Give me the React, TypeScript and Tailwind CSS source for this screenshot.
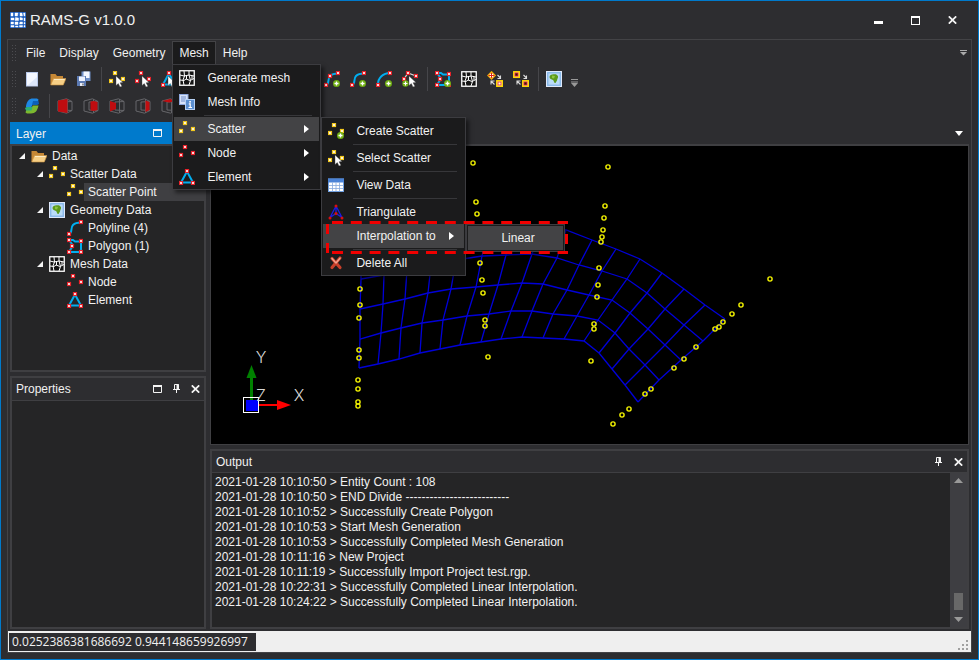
import React from "react";

type IconProps = { children?: React.ReactNode; size?: number };

const RED = "#e8222a";
const YELLOW = "#f2c81e";
const CYAN = "#00aef0";

function Svg({ children }: IconProps) {
  return (
    <svg width="16" height="16" viewBox="0 0 16 16" fill="none" className="block shrink-0" aria-hidden="true">
      {children}
    </svg>
  );
}

function Dot({ x, y, c = RED }: { x: number; y: number; c?: string }) {
  return <rect x={x + 0.5} y={y + 0.5} width="3" height="3" fill="#fff" stroke={c} strokeWidth="1.2" />;
}

function PlusBadge() {
  return (
    <g>
      <circle cx="12.5" cy="12.5" r="3.5" fill="#6fae12" />
      <path d="M12.5 10.5v4M10.5 12.5h4" stroke="#fff" strokeWidth="1.3" />
    </g>
  );
}

function CursorBadge() {
  return <path d="M7 5l7 6.5-3 .3 2 3.4-2 .8-1.700-3.400L7 14.500z" fill="#fff" stroke="#444" strokeWidth=".4" />;
}

function PointsIcon({ c, badge }: { c: string; badge?: React.ReactNode }) {
  return (
    <Svg>
      <Dot x={0} y={8} c={c} />
      <Dot x={4} y={0} c={c} />
      <Dot x={12} y={6} c={c} />
      {badge}
    </Svg>
  );
}

function TriangleIcon({ badge }: { badge?: React.ReactNode }) {
  return (
    <Svg>
      <path d="M8 2.500L2 13.500h12z" stroke={CYAN} strokeWidth="2" />
      <Dot x={6} y={0} />
      <Dot x={0} y={12} />
      <Dot x={12} y={12} />
      {badge}
    </Svg>
  );
}

function TriangulateIcon() {
  return (
    <Svg>
      <path d="M8 2L2 13.500 8 9.500l6 4L8 2v7.500" stroke="#1c1ce0" strokeWidth="1.3" />
      <circle cx="8" cy="2" r="1.500" fill="#d90f0f" />
      <circle cx="2" cy="14" r="1.500" fill="#d90f0f" />
      <circle cx="14" cy="14" r="1.500" fill="#d90f0f" />
      <circle cx="8" cy="9.500" r="1.500" fill="#d90f0f" />
    </Svg>
  );
}

function PolylineIcon({ mid, badge }: { mid?: boolean; badge?: React.ReactNode }) {
  return (
    <Svg>
      <path d="M2 14c4-1 1-6 4-9 2-2 4-2.500 8-2.500" stroke={CYAN} strokeWidth="2" />
      <Dot x={0} y={12} />
      <Dot x={12} y={0} />
      {mid && <Dot x={4} y={3} />}
      {badge}
    </Svg>
  );
}

function ArcIcon() {
  return (
    <Svg>
      <path d="M2 13.500C2 7 7 2 14 2" stroke={CYAN} strokeWidth="2" />
      <Dot x={0} y={12} />
      <Dot x={12} y={0} />
      <PlusBadge />
    </Svg>
  );
}

function EditLineIcon() {
  return (
    <Svg>
      <path d="M2 8l4-6 8 3" stroke="#ddd" strokeWidth="1.3" />
      <Dot x={4} y={0} />
      <Dot x={12} y={3} />
      <Dot x={0} y={6} />
      <circle cx="3.500" cy="12.500" r="3.200" fill="#6fae12" />
      <path d="M3.500 10.500v4M1.500 12.500h4" stroke="#fff" strokeWidth="1.200" />
      <CursorBadge />
    </Svg>
  );
}

function PolygonIcon({ badge }: { badge?: React.ReactNode }) {
  return (
    <Svg>
      <path d="M2 2h4l2 1.500h6V14H2l4-6.500L2 2" stroke={CYAN} strokeWidth="2" />
      <Dot x={0} y={0} />
      <Dot x={12} y={1} />
      <Dot x={3} y={6} />
      <Dot x={0} y={12} />
      <Dot x={12} y={12} />
      {badge}
    </Svg>
  );
}

function MeshIcon() {
  return (
    <Svg>
      <rect x=".75" y=".75" width="14.500" height="14.500" fill="#141414" stroke="#fff" strokeWidth="1.300" />
      <path d="M1 5l4 1 5-1 5 1M1 10l4 .5 2-1.500 4 1.500 4-2M5 1l.5 5L4 10l1 5M10 1v4l1.500 5.500L10 15M7.500 9V5.500M13 5.500V9" stroke="#fff" strokeWidth="1" />
    </Svg>
  );
}

function MapIcon() {
  return (
    <Svg>
      <rect x=".5" y=".5" width="15" height="15" fill="#8fc3ee" stroke="#dfe9fb" />
      <rect x="2" y="2" width="12" height="12" fill="#b9dcf8" stroke="#7fa6df" strokeWidth=".6" />
      <path d="M3.500 6c0-2 2-2.500 4-2.800 2-.3 4 .3 4.500 2 .4 1.600-.8 2.400-1 4.300L9.500 12C8 12.500 8 10 7 9 5.500 8.500 3.500 8 3.500 6z" fill="#5c9a1c" />
      <path d="M6 4.500l3 .5-1 2.500-2-.5z" fill="#8cc63f" />
    </Svg>
  );
}

function FolderIcon() {
  return (
    <Svg>
      <path d="M.5 13.500V3h5l1.500 2h6v8.500z" fill="#c58735" />
      <path d="M.7 14L3.500 7.500H16L13.300 14z" fill="#f6cf86" stroke="#c9913e" strokeWidth=".6" />
      <path d="M4 8.500h10.500" stroke="#fdebc4" strokeWidth="1" />
    </Svg>
  );
}

function NewFileIcon() {
  return (
    <Svg>
      <rect x="2.500" y="1.500" width="11" height="13.500" fill="#f5f8ff" stroke="#b9c9ea" />
      <path d="M4 14l9-8v8z" fill="#dde7f9" />
    </Svg>
  );
}

function SaveAllIcon() {
  return (
    <Svg>
      <rect x="5.500" y=".5" width="9" height="9.500" fill="#6f8fc8" />
      <rect x="7.500" y=".5" width="6" height="6.500" fill="#f4f7ff" />
      <rect x="1" y="5" width="9" height="10" fill="#5c7ab2" />
      <rect x="3" y="5.500" width="6" height="4.500" fill="#eef3ff" />
      <rect x="4" y="12" width="4" height="3" fill="#e8edf7" />
      <rect x="6.500" y="12.500" width="1" height="2" fill="#333" />
    </Svg>
  );
}

function InfoIcon() {
  return (
    <Svg>
      <rect x=".5" y=".5" width="8.500" height="10" fill="#d6e2f8" stroke="#8ea8dc" />
      <path d="M2 3h5M2 5h5M2 7h4" stroke="#6f8cc8" />
      <rect x="6.500" y="5.500" width="9" height="10" fill="#5b8fd0" stroke="#b5d0f3" />
      <rect x="10.300" y="7" width="1.600" height="1.600" fill="#fff" />
      <path d="M9.800 9.800h1.400v3.700M9.500 13.500h3.500" stroke="#fff" strokeWidth="1.200" />
    </Svg>
  );
}

function TableIcon() {
  return (
    <Svg>
      <rect x=".5" y="2" width="15" height="12.500" fill="#fff" stroke="#6f9fe0" />
      <rect x="0" y="1.500" width="16" height="4" fill="#4b83d6" />
      <path d="M.5 8.500h15M.5 11.500h15M4.500 5.500v9M8 5.500v9M11.500 5.500v9" stroke="#86a9dd" strokeWidth=".8" />
    </Svg>
  );
}

function DeleteIcon() {
  return (
    <Svg>
      <path d="M4 3.500l8 9M12 3L4 12.500" stroke="#c8402a" strokeWidth="3.200" strokeLinecap="round" />
      <path d="M4 3.500l3.500 4M12 3.200L8 8" stroke="#f5a08c" strokeWidth="1.500" strokeLinecap="round" />
    </Svg>
  );
}

function ArrowPair() {
  return (
    <path d="M10.500 4l3 3M13.500 4.500V7.500H10.500M7.500 13.500l-3.500-3.500M4 13.500V10H7.500" stroke="#ddd" strokeWidth="1.100" />
  );
}

function MergeIcon() {
  return (
    <Svg>
      <path d="M4.500.8L8.200 4.500 4.500 8.200.8 4.500z" fill="#fff" stroke="#f0a800" strokeWidth="1.300" />
      <path d="M1.500 4.500h6M4.500 2v5" stroke="#d82020" />
      <rect x="9.800" y="9.800" width="5.500" height="5.500" fill="#fff" stroke="#ffd800" strokeWidth="1.500" />
      <rect x="11" y="11" width="3" height="3" stroke="#e02020" strokeWidth=".8" />
      <ArrowPair />
    </Svg>
  );
}

function SplitIcon() {
  return (
    <Svg>
      <rect x=".8" y=".8" width="5.500" height="5.500" fill="#fff" stroke="#ffd800" strokeWidth="1.500" />
      <rect x="2" y="2" width="3" height="3" fill="#222" stroke="#e02020" />
      <rect x="9.800" y="9.800" width="5.500" height="5.500" fill="#fff" stroke="#ffd800" strokeWidth="1.500" />
      <rect x="11" y="11" width="3" height="3" fill="#222" stroke="#e02020" />
      <ArrowPair />
    </Svg>
  );
}

function RefreshIcon() {
  return (
    <Svg>
      <path d="M2 8C3 3 5 .5 9 .5h4l1.500 1L13 7H8.500L7 9.500H2z" fill="#1e88e5" />
      <path d="M9 3h5.500L15 6l-2 1H8z" fill="#0d5fb8" />
      <path d="M14.500 7.500c-1 5-3 8-7.500 8H3l-1.500-1L3 9.500h4.500L9 7.500z" fill="#7cb82f" />
      <path d="M7.500 12.500H2L1 10l2-1h5.500z" fill="#2fae72" />
    </Svg>
  );
}

type Face = "front" | "right" | "left" | "back" | "top" | "bottom";

const faces: Record<Face, string> = {
  front: "M1 2.500L10.500 1v14L1 13.500z",
  right: "M7.500 3.500L11 3l3.500 1v8L11 13l-3.500-.5z",
  left: "M1 3l6 2v6l-6 2.500z",
  back: "M10.500 2.500L14.500 4v8l-4 2z",
  top: "M1 3l8-2 6 2-7 1.500z",
  bottom: "M1 13l7-1.500L15 13l-7 2z",
};

function CubeIcon({ face }: { face: Face }) {
  return (
    <Svg>
      <path d="M1 3L9.500.800 15 3.500v9L9.500 15.200 1 13zM6 4v8M6 4l9-.5M6 12l9 .5M10.500 1v14" stroke="#66666a" strokeWidth="1" />
      <path d={faces[face]} fill="#c00d10" />
    </Svg>
  );
}

function LogoIcon() {
  return (
    <svg width="16" height="16" viewBox="0 0 16 16" className="block" aria-hidden="true">
      <rect width="16" height="16" fill="#1f5fc0" />
      <path d="M1 1h2v3H1zM5 1h3l-.5 3H5zM10 1h2l.5 3H10zM13.500 1H15v3h-1zM1 6h3v2H1zM5.500 5.500l3 .5v2.500H5zM10 5.500l2.500.5v2H10zM14 6h1v3h-1zM1 10h2.500v2H1zM5 10h3v2.500H5zM10 10h2.500v2H9.500zM14 10.500h1V12h-1zM1 13.500h3V15H1zM5.500 14H8v1H5.500zM9.500 13.500h3V15h-3zM14 13.500h1V15h-1z" fill="#fff" stroke="#fff" strokeWidth=".4" />
    </svg>
  );
}

function MaxGlyph() {
  return (
    <svg width="9" height="8" viewBox="0 0 9 8" className="block" aria-hidden="true">
      <path d="M.5 1h8v6.500h-8z" fill="none" stroke="#f4f4f4" />
      <path d="M0 1h9" stroke="#f4f4f4" strokeWidth="2" />
    </svg>
  );
}

function PinGlyph() {
  return (
    <svg width="7" height="9" viewBox="0 0 7 9" className="block" aria-hidden="true">
      <path d="M1.500 5V.5h4V5M0 5.500h7M3.500 5.500V9" fill="none" stroke="#f4f4f4" />
      <path d="M4.500 0v5" stroke="#f4f4f4" strokeWidth="2" />
    </svg>
  );
}

function CloseGlyph() {
  return (
    <svg width="9" height="8" viewBox="0 0 9 8" className="block" aria-hidden="true">
      <path d="M.8.3l7.400 7.400M8.200.3L.8 7.700" stroke="#f4f4f4" strokeWidth="1.700" />
    </svg>
  );
}

function Grip() {
  return (
    <span className="ml-[3px] mr-0.5 h-[18px] w-[6px] shrink-0 bg-[radial-gradient(#4c4c50_1px,transparent_1px)] bg-[length:3px_3px]" />
  );
}

function ToolSep() {
  return <span className="ml-1 mr-0.5 h-6 w-px shrink-0 bg-[#46464a]" />;
}

function Tool({ label, children }: { label: string; children: React.ReactNode }) {
  return (
    <button type="button" aria-label={label} className="flex h-6 w-[26px] shrink-0 items-center justify-center hover:bg-[#3f3f46]">
      {children}
    </button>
  );
}

function MenuItem({
  icon,
  label,
  active,
  children,
}: {
  icon?: React.ReactNode;
  label: string;
  active?: boolean;
  children?: React.ReactNode;
}) {
  return (
    <li role="none" className={active ? "relative mx-px bg-[#434345]" : "relative mx-px"}>
      <button type="button" role="menuitem" aria-haspopup={children ? "menu" : undefined} className="flex h-6 w-full items-center whitespace-nowrap pl-[5px] pr-2.5 text-left">
        <span className="mr-3 w-4 shrink-0">{icon}</span>
        <span className="flex-1">{label}</span>
        {children && (
          <svg width="5" height="8" viewBox="0 0 5 8" aria-hidden="true">
            <path d="M0 0l5 4-5 4z" fill="#fff" />
          </svg>
        )}
      </button>
      {children}
    </li>
  );
}

function MenuSep() {
  return (
    <li role="separator" className="ml-[31px] mr-2 flex h-[3px] items-center">
      <span className="h-px w-full bg-[#37373a]" />
    </li>
  );
}

const menuBox = "absolute z-20 border border-[#3c3c40] bg-[#1b1b1c] shadow-[3px_3px_4px_rgba(0,0,0,0.5)]";

function Callout() {
  return (
    <svg width="242" height="33" viewBox="327 221 242 33" className="pointer-events-none absolute -top-[3px] left-[3px] z-40" fill="none" stroke="#f00000" strokeWidth="3" aria-hidden="true">
      <path d="M333 222.500H568" strokeDasharray="11 7.800" />
      <path d="M333 252.500H568" strokeDasharray="11 7.800" />
      <path d="M328.500 224v10M328.500 243v10M567.500 234v10M566 222.500h3M566 252.500h3" />
    </svg>
  );
}

function MeshMenu() {
  return (
    <ul role="menu" className={`${menuBox} left-0 top-full w-[149px] pt-px`}>
      <MenuItem icon={<MeshIcon />} label="Generate mesh" />
      <MenuItem icon={<InfoIcon />} label="Mesh Info" />
      <MenuSep />
      <MenuItem icon={<PointsIcon c={YELLOW} />} label="Scatter" active>
        <ul role="menu" className={`${menuBox} left-full top-0 ml-0.5 w-[145px] pt-px`}>
          <MenuItem icon={<PointsIcon c={YELLOW} badge={<PlusBadge />} />} label="Create Scatter" />
          <MenuSep />
          <MenuItem icon={<PointsIcon c={YELLOW} badge={<CursorBadge />} />} label="Select Scatter" />
          <MenuSep />
          <MenuItem icon={<TableIcon />} label="View Data" />
          <MenuSep />
          <MenuItem icon={<TriangulateIcon />} label="Triangulate" />
          <MenuItem label="Interpolation to" active>
            <ul role="menu" className={`${menuBox} left-full top-0 ml-0.5 w-[99px] py-px`}>
              <MenuItem label="Linear" active />
            </ul>
            <Callout />
          </MenuItem>
          <MenuSep />
          <MenuItem icon={<DeleteIcon />} label="Delete All" />
        </ul>
      </MenuItem>
      <MenuItem icon={<PointsIcon c={RED} />} label="Node">
        <></>
      </MenuItem>
      <MenuItem icon={<TriangleIcon />} label="Element">
        <></>
      </MenuItem>
    </ul>
  );
}

function TopMenu({ label }: { label: string }) {
  return (
    <button type="button" role="menuitem" className="h-[23px] border border-transparent px-1.5">
      {label}
    </button>
  );
}

const indents = ["pl-[7px]", "pl-[25px]", "pl-[43px]"];

function TreeRow({ level, icon, label, leaf, selected }: { level: number; icon: React.ReactNode; label: string; leaf?: boolean; selected?: boolean }) {
  return (
    <li role="treeitem" aria-selected={!!selected} className={`flex h-[18px] items-center ${indents[level]}`}>
      <span className="w-3 shrink-0">
        {!leaf && (
          <svg width="6" height="6" viewBox="0 0 6 6" className="block" aria-hidden="true">
            <path d="M6 0v6H0z" fill="#f4f4f4" />
          </svg>
        )}
      </span>
      {icon}
      <span className={selected ? "ml-px flex h-full flex-1 items-center bg-[#3f3f42] pl-1" : "ml-px pl-1"}>{label}</span>
    </li>
  );
}

type P = [number, number];

const rows: P[][] = [
  [[359, 368], [378, 364], [399, 359], [420, 353], [440, 349], [460, 345], [481, 342], [501, 339], [522, 337], [543, 338], [564, 339], [584, 341], [599, 353], [612, 369], [625, 385], [638, 402]],
  [[360, 339], [381, 333], [401, 328], [422, 323], [443, 320], [467, 316], [489, 314], [511, 311], [532, 311], [553, 314], [577, 316], [598, 320], [615, 333], [629, 349], [645, 365], [659, 380]],
  [[360, 309], [383, 304], [405, 299], [428, 293], [451, 289], [476, 287], [498, 285], [522, 283], [543, 284], [567, 290], [589, 295], [612, 300], [630, 313], [648, 329], [665, 345], [681, 360]],
  [[361, 279], [384, 275], [407, 270], [431, 265], [456, 260], [482, 256], [506, 255], [532, 254], [557, 258], [579, 265], [602, 271], [627, 279], [647, 293], [665, 309], [684, 325], [703, 341]],
  [[361, 250], [385, 245], [409, 240], [434, 235], [460, 230], [488, 228], [514, 227], [541, 227], [566, 230], [592, 240], [616, 249], [640, 259], [662, 273], [684, 289], [705, 305], [725, 319]],
];

const points: P[] = [
  [473, 163], [476, 202], [477, 214], [480, 263], [482, 280], [483, 293], [485, 320], [485, 326], [488, 357],
  [360, 289], [360, 305], [359, 318], [359, 350], [359, 358], [358, 380], [358, 389], [358, 402], [358, 406],
  [608, 167], [605, 206], [604, 218], [603, 230], [602, 237], [601, 242], [599, 268], [598, 285], [597, 297],
  [594, 324], [594, 329], [591, 361], [770, 279], [741, 305], [732, 314], [723, 322], [719, 327], [715, 329],
  [696, 347], [684, 359], [674, 368], [651, 389], [645, 394], [629, 409], [622, 415], [613, 424],
];

const toPath = (line: P[]) => "M" + line.map((p) => p.join(" ")).join("L");

function Viewport() {
  const columns = rows[0].map((_, i) => rows.map((r) => r[i]));
  return (
    <svg width="757" height="298" viewBox="211 146 757 298" className="block" fill="none" role="img" aria-label="Mesh view">
      <g stroke="#0000d8" strokeWidth="1.300">
        {[...rows, ...columns].map((line, i) => (
          <path key={i} d={toPath(line)} />
        ))}
      </g>
      <g stroke="#f4f400" strokeWidth="1.400">
        {points.map(([x, y], i) => (
          <circle key={i} cx={x} cy={y} r="2.100" />
        ))}
      </g>
      <path d="M251.500 400V377" stroke="#008000" strokeWidth="3" />
      <path d="M251.500 365l5 13h-10z" fill="#008000" />
      <path d="M258 405h20" stroke="#f00" strokeWidth="2" />
      <path d="M277 400l14 5-14 5z" fill="#f00" />
      <rect x="246" y="400" width="12" height="11" fill="#0000ff" />
      <rect x="243.500" y="397.500" width="15" height="15" stroke="#fff" />
      <g fill="#d8d8d8" className="font-['Inter',sans-serif] text-base font-light" textAnchor="middle">
        <text x="261" y="363">Y</text>
        <text x="261" y="401">Z</text>
        <text x="299" y="401">X</text>
      </g>
    </svg>
  );
}

const log = [
  "2021-01-28 10:10:50 > Entity Count : 108",
  "2021-01-28 10:10:50 > END Divide --------------------------",
  "2021-01-28 10:10:52 > Successfully Create Polygon",
  "2021-01-28 10:10:53 > Start Mesh Generation",
  "2021-01-28 10:10:53 > Successfully Completed Mesh Generation",
  "2021-01-28 10:11:16 > New Project",
  "2021-01-28 10:11:19 > Successfully Import Project test.rgp.",
  "2021-01-28 10:22:31 > Successfully Completed Linear Interpolation.",
  "2021-01-28 10:24:22 > Successfully Completed Linear Interpolation.",
];

export default function App() {
  return (
    <div className="flex h-screen flex-col overflow-hidden border border-[#007acc] bg-[#2d2d30] px-1.5 pb-1.5 font-['Liberation_Sans',Arial,sans-serif] text-xs text-[#f1f1f1]">
      <header className="flex h-[38px] shrink-0 items-center pl-[3px] pr-[15px]">
        <LogoIcon />
        <h1 className="ml-1 flex-1 text-[15px]">RAMS-G v1.0.0</h1>
        <div className="flex gap-7">
          <button type="button" aria-label="Minimize" className="flex h-4 w-[9px] items-center">
            <span className="mt-1 h-[3px] w-[9px] bg-white" />
          </button>
          <button type="button" aria-label="Maximize" className="flex h-4 w-[9px] items-center">
            <span className="h-[9px] w-[9px] border border-t-2 border-white" />
          </button>
          <button type="button" aria-label="Close" className="flex h-4 w-[9px] items-center">
            <CloseGlyph />
          </button>
        </div>
      </header>

      <div className="flex min-h-0 flex-1 flex-col border border-[#434346]">
        <nav className="flex h-[25px] shrink-0 items-center pr-1">
          <Grip />
          <div role="menubar" className="flex flex-1">
            <TopMenu label="File" />
            <TopMenu label="Display" />
            <TopMenu label="Geometry" />
            <div className="relative">
              <button type="button" role="menuitem" aria-expanded="true" className="h-[23px] border border-b-0 border-[#434346] bg-[#1b1b1c] px-1.5">
                Mesh
              </button>
              <MeshMenu />
            </div>
            <TopMenu label="Help" />
          </div>
          <svg width="7" height="6" viewBox="0 0 7 6" aria-hidden="true">
            <path d="M0 .5h7" stroke="#aaa" />
            <path d="M0 2h7L3.500 5.500z" fill="#aaa" />
          </svg>
        </nav>

        <div role="toolbar" aria-label="Main" className="flex h-[27px] shrink-0 items-center">
          <Grip />
          <Tool label="New"><NewFileIcon /></Tool>
          <Tool label="Open"><FolderIcon /></Tool>
          <Tool label="Save all"><SaveAllIcon /></Tool>
          <ToolSep />
          <Tool label="Select scatter"><PointsIcon c={YELLOW} badge={<CursorBadge />} /></Tool>
          <Tool label="Select node"><PointsIcon c={RED} badge={<CursorBadge />} /></Tool>
          <Tool label="Select element"><TriangleIcon badge={<CursorBadge />} /></Tool>
          <Tool label="Select polyline"><PolylineIcon badge={<CursorBadge />} /></Tool>
          <Tool label="Select polygon"><PolygonIcon badge={<CursorBadge />} /></Tool>
          <ToolSep />
          <Tool label="Create scatter"><PointsIcon c={YELLOW} badge={<PlusBadge />} /></Tool>
          <Tool label="Create node"><PointsIcon c={RED} badge={<PlusBadge />} /></Tool>
          <Tool label="Create element"><TriangleIcon badge={<PlusBadge />} /></Tool>
          <Tool label="Create polyline"><PolylineIcon mid badge={<PlusBadge />} /></Tool>
          <Tool label="Create spline"><PolylineIcon badge={<PlusBadge />} /></Tool>
          <Tool label="Create arc"><ArcIcon /></Tool>
          <Tool label="Edit line"><EditLineIcon /></Tool>
          <ToolSep />
          <Tool label="Create polygon"><PolygonIcon badge={<PlusBadge />} /></Tool>
          <Tool label="Generate mesh"><MeshIcon /></Tool>
          <Tool label="Merge"><MergeIcon /></Tool>
          <Tool label="Split"><SplitIcon /></Tool>
          <ToolSep />
          <Tool label="Map"><MapIcon /></Tool>
          <svg width="7" height="8" viewBox="0 0 7 8" className="ml-1 mt-2" aria-hidden="true">
            <path d="M0 .5h7M0 3h7" stroke="#999" />
            <path d="M0 4h7L3.500 8z" fill="#999" />
          </svg>
        </div>

        <div role="toolbar" aria-label="View" className="flex h-7 shrink-0 items-center">
          <Grip />
          <Tool label="Refresh view"><RefreshIcon /></Tool>
          <ToolSep />
          <Tool label="Front view"><CubeIcon face="front" /></Tool>
          <Tool label="Right view"><CubeIcon face="right" /></Tool>
          <Tool label="Left view"><CubeIcon face="left" /></Tool>
          <Tool label="Back view"><CubeIcon face="back" /></Tool>
          <Tool label="Top view"><CubeIcon face="top" /></Tool>
          <Tool label="Bottom view"><CubeIcon face="bottom" /></Tool>
        </div>

        <main className="flex min-h-0 flex-1 gap-1 px-0.5 py-0.5">
          <div className="flex w-[196px] shrink-0 flex-col gap-1">
            <section className="flex min-h-0 flex-1 flex-col">
              <div className="flex h-[22px] shrink-0 items-center justify-between bg-[#007acc] pl-1.5 pr-11">
                <h2 className="pt-px">Layer</h2>
                <button type="button" aria-label="Maximize Layer"><MaxGlyph /></button>
              </div>
              <ul role="tree" className="min-h-0 flex-1 border-2 border-[#3f3f42] bg-[#252526] pt-px">
                <TreeRow level={0} icon={<FolderIcon />} label="Data" />
                <TreeRow level={1} icon={<PointsIcon c={YELLOW} />} label="Scatter Data" />
                <TreeRow level={2} icon={<PointsIcon c={YELLOW} />} label="Scatter Point" leaf selected />
                <TreeRow level={1} icon={<MapIcon />} label="Geometry Data" />
                <TreeRow level={2} icon={<PolylineIcon />} label="Polyline (4)" leaf />
                <TreeRow level={2} icon={<PolygonIcon />} label="Polygon (1)" leaf />
                <TreeRow level={1} icon={<MeshIcon />} label="Mesh Data" />
                <TreeRow level={2} icon={<PointsIcon c={RED} />} label="Node" leaf />
                <TreeRow level={2} icon={<TriangleIcon />} label="Element" leaf />
              </ul>
            </section>

            <section className="flex min-h-0 flex-1 flex-col border-2 border-[#3f3f42] bg-[#252526]">
              <div className="flex h-[23px] shrink-0 items-center gap-[11px] border-b border-[#3f3f42] bg-[#2d2d30] pl-1 pr-1">
                <h2 className="flex-1 pt-px">Properties</h2>
                <button type="button" aria-label="Maximize Properties"><MaxGlyph /></button>
                <button type="button" aria-label="Pin Properties"><PinGlyph /></button>
                <button type="button" aria-label="Close Properties"><CloseGlyph /></button>
              </div>
            </section>
          </div>

          <div className="flex min-w-0 flex-1 flex-col">
            <div className="flex h-[22px] shrink-0 items-center justify-end pr-1.5">
              <button type="button" aria-label="Window list">
                <svg width="8" height="5" viewBox="0 0 8 5" className="block" aria-hidden="true">
                  <path d="M0 0h8L4 5z" fill="#fff" />
                </svg>
              </button>
            </div>
            <div className="mb-1 min-h-0 flex-1 overflow-hidden border border-t-2 border-[#3f3f42] bg-black">
              <Viewport />
            </div>
            <section className="flex h-[180px] shrink-0 flex-col border-2 border-[#3f3f42] bg-[#252526]">
              <div className="flex h-[22px] shrink-0 items-center gap-3 border-b border-[#3f3f42] bg-[#2d2d30] pl-1 pr-1">
                <h2 className="flex-1">Output</h2>
                <button type="button" aria-label="Pin Output"><PinGlyph /></button>
                <button type="button" aria-label="Close Output"><CloseGlyph /></button>
              </div>
              <div className="flex min-h-0 flex-1">
                <ul role="log" className="flex-1 pl-[3px] pt-0.5">
                  {log.map((line, i) => (
                    <li key={i} className="h-[15px] leading-[15px]">{line}</li>
                  ))}
                </ul>
                <div aria-hidden="true" className="flex w-[17px] flex-col items-center bg-[#3e3e42] py-[5px]">
                  <svg width="9" height="5" viewBox="0 0 9 5"><path d="M0 5h9L4.500 0z" fill="#999" /></svg>
                  <span className="mt-auto mb-[7px] h-[17px] w-[9px] bg-[#686868]" />
                  <svg width="9" height="5" viewBox="0 0 9 5"><path d="M0 0h9L4.500 5z" fill="#999" /></svg>
                </div>
              </div>
            </section>
          </div>
        </main>

        <footer className="flex h-[21px] shrink-0 items-end justify-between bg-[#efefef] p-px pr-0.5">
          <output className="flex h-[18px] items-center bg-[#2d2d30] pl-[3px] pr-2 font-['Open_Sans','Noto_Sans',sans-serif]">
            0.0252386381686692 0.944148659926997
          </output>
          <svg width="11" height="11" viewBox="0 0 11 11" aria-hidden="true">
            <path d="M8 0h2v2H8zM4 4h2v2H4zM8 4h2v2H8zM0 8h2v2H0zM4 8h2v2H4zM8 8h2v2H8z" fill="#a0a0a0" />
          </svg>
        </footer>
      </div>
    </div>
  );
}
